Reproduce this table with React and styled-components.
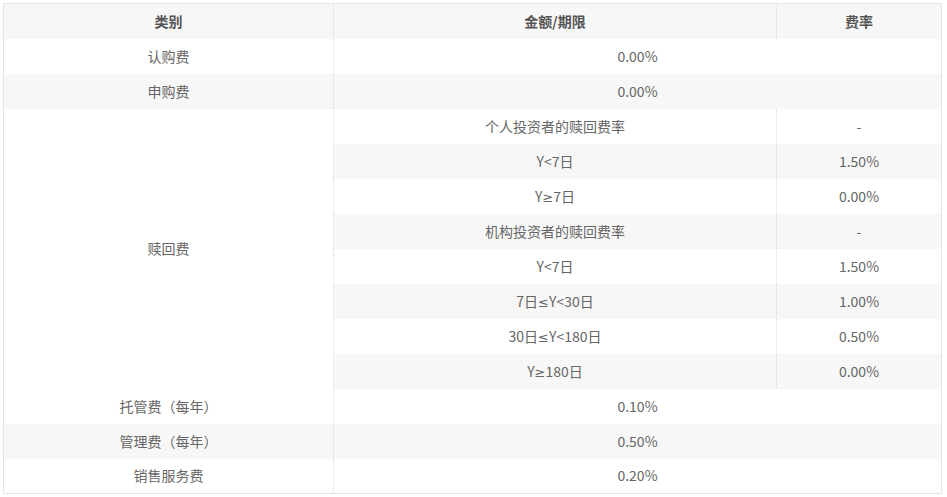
import React from "react";
import styled, { createGlobalStyle } from "styled-components";

const GlobalStyle = createGlobalStyle`
  body {
    margin: 0;
    background: #fff;
    font-family: "Noto Sans CJK SC", "Noto Sans", sans-serif;
  }
`;

const Wrap = styled.div`
  padding: 3px 5px 0 3px;
`;

const Table = styled.table`
  width: 939px;
  border-collapse: collapse;
  table-layout: fixed;
  border: 1px solid #e4e4e4;
  font-size: 14px;
  color: #666;
`;

const Th = styled.th`
  box-sizing: border-box;
  height: 35px;
  padding: 0 0 1px;
  background: #f7f7f7;
  color: #555;
  font-weight: bold;
  text-align: center;
  border-right: ${(p) => (p.$last ? "none" : "1px dotted #dcdcdc")};
`;

const Td = styled.td`
  box-sizing: border-box;
  height: 35px;
  padding: 0 0 1px;
  text-align: center;
  vertical-align: middle;
  background: ${(p) => (p.$shade ? "#f7f7f7" : "#fff")};
  border-right: ${(p) => (p.$divide ? "1px dotted #dcdcdc" : "none")};
`;

const Sym = styled.span`
  font-family: "Noto Sans", "DejaVu Sans", sans-serif;
  font-size: 13px;
  line-height: 1;
`;

// swap the math signs into a latin font so they stay narrow
const term = (text) =>
  text.split(/([≤≥])/).map((part, i) =>
    part === "≤" || part === "≥" ? <Sym key={i}>{part}</Sym> : part
  );

const redemption = [
  ["个人投资者的赎回费率", "-"],
  ["Y<7日", "1.50%"],
  ["Y≥7日", "0.00%"],
  ["机构投资者的赎回费率", "-"],
  ["Y<7日", "1.50%"],
  ["7日≤Y<30日", "1.00%"],
  ["30日≤Y<180日", "0.50%"],
  ["Y≥180日", "0.00%"],
];

const SimpleRow = ({ label, value, shade }) => (
  <tr>
    <Td $shade={shade} $divide>{label}</Td>
    <Td $shade={shade} colSpan={2}>{value}</Td>
  </tr>
);

export default function App() {
  return (
    <Wrap>
      <GlobalStyle />
      <Table>
        <colgroup>
          <col style={{ width: 330 }} />
          <col style={{ width: 443 }} />
          <col />
        </colgroup>
        <thead>
          <tr>
            <Th>类别</Th>
            <Th>金额/期限</Th>
            <Th $last>费率</Th>
          </tr>
        </thead>
        <tbody>
          <SimpleRow label="认购费" value="0.00%" />
          <SimpleRow label="申购费" value="0.00%" shade />
          {redemption.map(([period, rate], i) => (
            <tr key={i}>
              {i === 0 && (
                <Td rowSpan={redemption.length} $divide>
                  赎回费
                </Td>
              )}
              <Td $shade={i % 2 === 1} $divide>{term(period)}</Td>
              <Td $shade={i % 2 === 1}>{rate}</Td>
            </tr>
          ))}
          <SimpleRow label="托管费（每年）" value="0.10%" />
          <SimpleRow label="管理费（每年）" value="0.50%" shade />
          <SimpleRow label="销售服务费" value="0.20%" />
        </tbody>
      </Table>
    </Wrap>
  );
}
